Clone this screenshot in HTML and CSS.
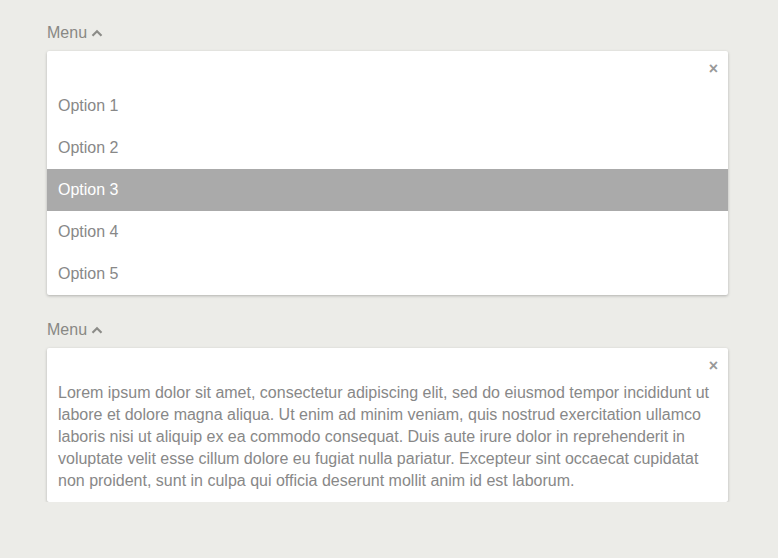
FILE: index.html
```html
<!DOCTYPE html>
<html>
<head>
<meta charset="utf-8">
<link rel="stylesheet" href="styles.css">
</head>
<body>
<div class="page">
  <section class="menu">
    <div class="menu-label">Menu <svg class="chev" width="12" height="8" viewBox="0 0 12 8"><path d="M1.5 6.8 L6 2.3 L10.5 6.8" fill="none" stroke="#8c8c88" stroke-width="2.2"/></svg></div>
    <div class="panel">
      <div class="panel-head"><span class="close">×</span></div>
      <ul class="options">
        <li class="option">Option 1</li>
        <li class="option">Option 2</li>
        <li class="option selected">Option 3</li>
        <li class="option">Option 4</li>
        <li class="option">Option 5</li>
      </ul>
    </div>
  </section>
  <section class="menu">
    <div class="menu-label">Menu <svg class="chev" width="12" height="8" viewBox="0 0 12 8"><path d="M1.5 6.8 L6 2.3 L10.5 6.8" fill="none" stroke="#8c8c88" stroke-width="2.2"/></svg></div>
    <div class="panel">
      <div class="panel-head"><span class="close">×</span></div>
      <p class="text">Lorem ipsum dolor sit amet, consectetur adipiscing elit, sed do eiusmod tempor incididunt ut labore et dolore magna aliqua. Ut enim ad minim veniam, quis nostrud exercitation ullamco laboris nisi ut aliquip ex ea commodo consequat. Duis aute irure dolor in reprehenderit in voluptate velit esse cillum dolore eu fugiat nulla pariatur. Excepteur sint occaecat cupidatat non proident, sunt in culpa qui officia deserunt mollit anim id est laborum.</p>
    </div>
  </section>
</div>
</body>
</html>
```
FILE: styles.css
```css
html, body {
  margin: 0;
  padding: 0;
  background: #ecece8;
}
body {
  font-family: "Liberation Sans", Arial, sans-serif;
  font-size: 16px;
  color: #888;
}
.page {
  padding: 24px 50px 0 47px;
  display: flex;
  flex-direction: column;
  gap: 26px;
}
.menu {
  display: flex;
  flex-direction: column;
  gap: 9px;
}
.menu-label {
  line-height: 18px;
  height: 18px;
  color: #888884;
  display: flex;
  align-items: center;
  gap: 4px;
}
.chev {
  display: block;
}
.panel {
  background: #fff;
  border-radius: 2px;
  box-shadow: 0 1px 3px rgba(0,0,0,0.25);
  width: 681px;
}
.panel-head {
  height: 34px;
  display: flex;
  justify-content: flex-end;
  align-items: center;
  padding-right: 10px;
  padding-top: 2px;
  box-sizing: border-box;
}
.close {
  color: #999;
  font-weight: bold;
  font-size: 16px;
  line-height: 16px;
}
.options {
  list-style: none;
  margin: 0;
  padding: 0;
}
.option {
  height: 42px;
  line-height: 42px;
  padding-left: 11px;
  color: #888;
}
.option.selected {
  background: #aaa;
  color: #fff;
}
.text {
  margin: 0;
  padding: 0 11px 10px;
  line-height: 22px;
  color: #888;
}
```
